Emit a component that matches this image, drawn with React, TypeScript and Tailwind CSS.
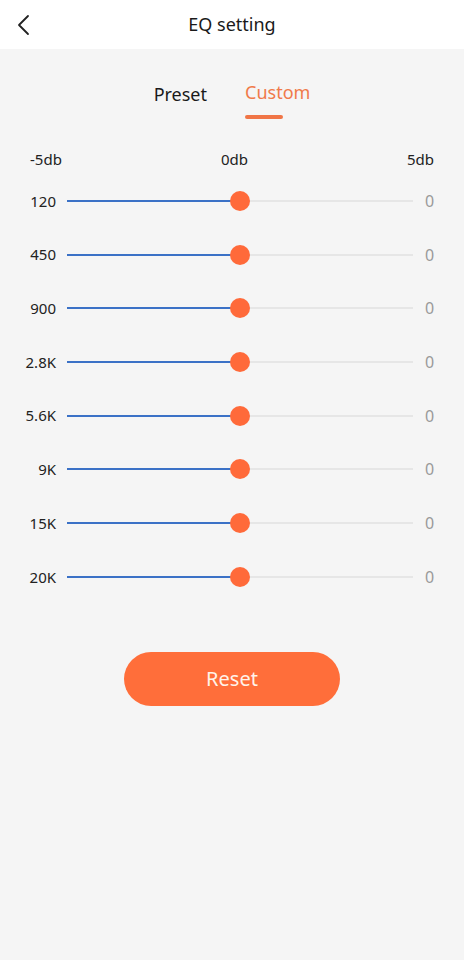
import React from "react";

const bands = ["120", "450", "900", "2.8K", "5.6K", "9K", "15K", "20K"];

function Row({ label }: { label: string }) {
  return (
    <div className="flex items-center h-[53.72px]">
      <div className="w-[56px] text-right text-[15px] text-[#222]">{label}</div>
      <div className="relative ml-[11px] w-[346px] h-[20px]">
        <div className="absolute left-0 right-0 top-[9px] h-[2px] bg-[#e6e6e6]" />
        <div className="absolute left-0 w-[170px] top-[9px] h-[2px] bg-[#3b71c6]" />
        <div className="absolute left-[163px] top-0 w-[20px] h-[20px] rounded-full bg-[#ff6a3a]" />
      </div>
      <div className="ml-[12px] text-[16px] text-[#9a9a9a]">0</div>
    </div>
  );
}

export default function App() {
  return (
    <div
      className="w-[464px] h-[960px] bg-[#f5f5f5] flex flex-col"
      style={{ fontFamily: '"Noto Sans", Roboto, sans-serif' }}
    >
      <div className="h-[49px] bg-white relative flex items-center justify-center">
        <svg
          className="absolute left-[14px] top-[13px]"
          width="20"
          height="24"
          viewBox="0 0 20 24"
          fill="none"
          stroke="#222"
          strokeWidth="1.8"
          strokeLinecap="round"
          strokeLinejoin="round"
        >
          <path d="M14 3 L5 12 L14 21" />
        </svg>
        <span className="text-[18px] text-[#1a1a1a]">EQ setting</span>
      </div>

      <div className="flex justify-center gap-[38px] pt-[30px]">
        <div className="flex flex-col items-center">
          <span className="text-[18px] leading-[26px] text-[#1a1a1a] mt-[2px]">Preset</span>
        </div>
        <div className="flex flex-col items-start">
          <span className="text-[18px] leading-[26px] text-[#f07a4a]">Custom</span>
          <div className="mt-[10px] w-[38px] h-[4px] rounded-full bg-[#f07546]" />
        </div>
      </div>

      <div className="flex justify-between px-[30px] mt-[30px] text-[15px] text-[#222] leading-[20px]">
        <span>-5db</span>
        <span>0db</span>
        <span>5db</span>
      </div>

      <div className="mt-[5px]">
        {bands.map((b) => (
          <Row key={b} label={b} />
        ))}
      </div>

      <div className="flex justify-center mt-[48px]">
        <button className="w-[216px] h-[54px] rounded-full bg-[#ff6e3a] text-[20px] text-[#fff3ea]">
          Reset
        </button>
      </div>
    </div>
  );
}
